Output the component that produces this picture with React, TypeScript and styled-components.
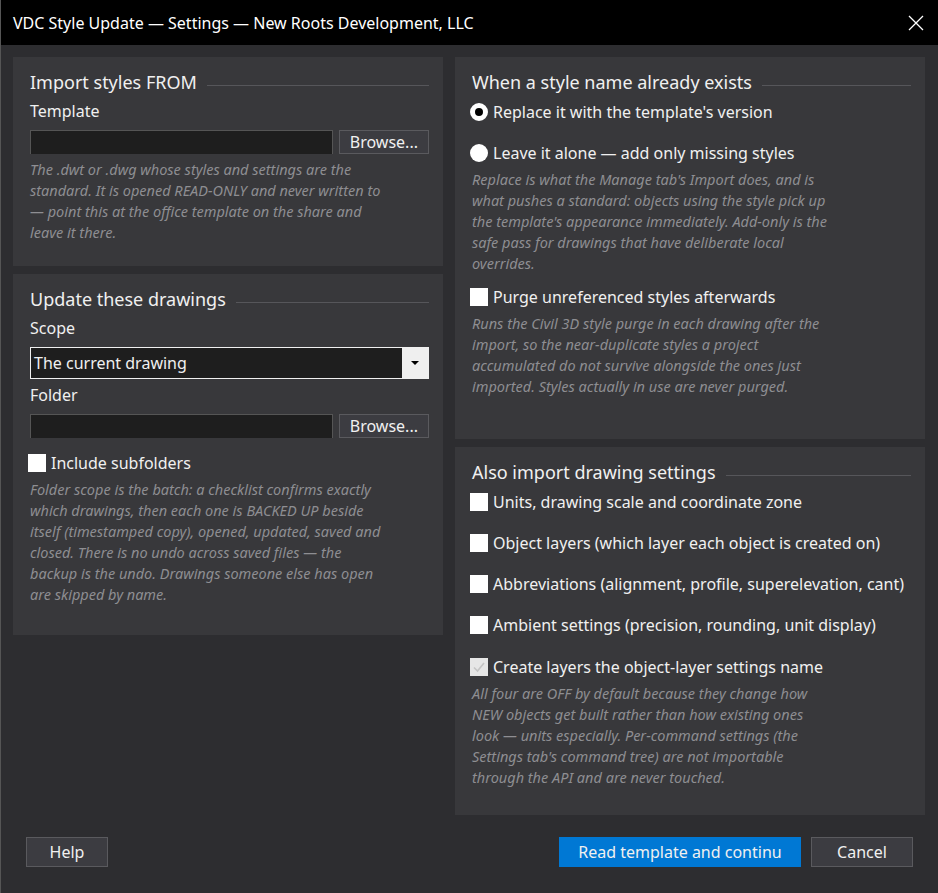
import React from "react";
import styled, { createGlobalStyle } from "styled-components";

const Global = createGlobalStyle`
  html, body { margin: 0; padding: 0; background: #2d2d30; }
  body { font-family: "Noto Sans", "Open Sans", sans-serif; color: #f0f0f0; }
`;

const Window = styled.div`
  width: 938px;
  height: 893px;
  background: #2d2d30;
  display: flex;
  flex-direction: column;
  box-sizing: border-box;
  border-left: 1px solid #555;
`;

const TitleBar = styled.div`
  height: 45px;
  background: #000;
  display: flex;
  align-items: center;
  justify-content: space-between;
  padding: 0 14px 0 12px;
  font-size: 16px;
  color: #fff;
  flex-shrink: 0;
`;

const Body = styled.div`
  display: grid;
  grid-template-columns: 430px 470px;
  column-gap: 12px;
  padding: 12px 0 0 12px;
  align-items: start;
`;

const Column = styled.div`
  display: flex;
  flex-direction: column;
  gap: 8px;
`;

const Panel = styled.div<{ $h: number }>`
  background: #38383b;
  height: ${(p) => p.$h}px;
  box-sizing: border-box;
  padding: 12px 14px 0 17px;
`;

const Legend = styled.div`
  display: flex;
  align-items: center;
  gap: 10px;
  font-size: 18px;
  line-height: 26px;
  color: #f0f0f0;
  &::after {
    content: "";
    flex: 1;
    height: 1px;
    background: #56565a;
    margin-top: 6px;
  }
`;

const Label = styled.div`
  font-size: 16px;
  line-height: 20px;
  margin: 6px 0 9px;
`;

const FieldRow = styled.div`
  display: flex;
  gap: 6px;
  align-items: center;
`;

const TextBox = styled.div`
  flex: 1;
  height: 23px;
  background: #1e1e1e;
  border: 1px solid #555;
  border-bottom: none;
`;

const Button = styled.button<{ $primary?: boolean }>`
  font-family: inherit;
  font-size: 16px;
  color: #f0f0f0;
  background: ${(p) => (p.$primary ? "#0078d4" : "#3c3c41")};
  border: 1px solid ${(p) => (p.$primary ? "#0078d4" : "#5a5a5e")};
  padding: 0 10px;
  height: 24px;
  cursor: pointer;
`;

const Help = styled.p`
  margin: 5px 0 0;
  font-size: 14.5px;
  line-height: 21px;
  font-style: italic;
  color: #8e8e92;
  max-width: 362px;
`;

const Select = styled.div`
  display: flex;
  height: 30px;
  border: 1px solid #f0f0f0;
  background: #1e1e1e;
  font-size: 16px;
  align-items: center;
  margin-bottom: 2px;
`;

const SelectText = styled.div`
  flex: 1;
  padding-left: 3px;
`;

const SelectArrow = styled.div`
  width: 26px;
  height: 100%;
  background: #efefef;
  display: flex;
  align-items: center;
  justify-content: center;
  &::before {
    content: "";
    border-left: 4px solid transparent;
    border-right: 4px solid transparent;
    border-top: 4px solid #000;
  }
`;

const Option = styled.label<{ $mt?: number }>`
  display: flex;
  align-items: center;
  gap: 5px;
  font-size: 16px;
  line-height: 22px;
  margin-top: ${(p) => p.$mt ?? 0}px;
  margin-left: -2px;
`;

const Box = styled.span<{ $checked?: boolean }>`
  width: 18px;
  height: 18px;
  background: ${(p) => (p.$checked ? "#e6e6e6" : "#fff")};
  display: inline-flex;
  align-items: center;
  justify-content: center;
  flex-shrink: 0;
`;

const Radio = styled.span<{ $selected?: boolean }>`
  width: 18px;
  height: 18px;
  border-radius: 50%;
  box-sizing: border-box;
  background: ${(p) => (p.$selected ? "#000" : "#fff")};
  border: ${(p) => (p.$selected ? "5px solid #fff" : "none")};
  flex-shrink: 0;
`;

const Footer = styled.div`
  display: flex;
  align-items: center;
  padding: 22px 25px 0 25px;
  gap: 10px;
`;

const Spacer = styled.div`
  flex: 1;
`;

export default function App() {
  return (
    <>
      <Global />
      <Window>
        <TitleBar>
          <span>VDC Style Update — Settings — New Roots Development, LLC</span>
          <svg width="16" height="16" viewBox="0 0 16 16">
            <path d="M1 1L15 15M15 1L1 15" stroke="#fff" strokeWidth="1.3" />
          </svg>
        </TitleBar>
        <Body>
          <Column>
            <Panel $h={209}>
              <Legend>Import styles FROM</Legend>
              <Label>Template</Label>
              <FieldRow>
                <TextBox />
                <Button>Browse...</Button>
              </FieldRow>
              <Help>
                The .dwt or .dwg whose styles and settings are the standard. It is opened READ-ONLY and never
                written to — point this at the office template on the share and leave it there.
              </Help>
            </Panel>
            <Panel $h={361}>
              <Legend>Update these drawings</Legend>
              <Label>Scope</Label>
              <Select>
                <SelectText>The current drawing</SelectText>
                <SelectArrow />
              </Select>
              <Label>Folder</Label>
              <FieldRow>
                <TextBox />
                <Button>Browse...</Button>
              </FieldRow>
              <Option $mt={14}>
                <Box /> Include subfolders
              </Option>
              <Help>
                Folder scope is the batch: a checklist confirms exactly which drawings, then each one is BACKED UP
                beside itself (timestamped copy), opened, updated, saved and closed. There is no undo across saved
                files — the backup is the undo. Drawings someone else has open are skipped by name.
              </Help>
            </Panel>
          </Column>
          <Column>
            <Panel $h={382}>
              <Legend>When a style name already exists</Legend>
              <Option $mt={6}>
                <Radio $selected /> Replace it with the template's version
              </Option>
              <Option $mt={19}>
                <Radio /> Leave it alone — add only missing styles
              </Option>
              <Help>
                Replace is what the Manage tab's Import does, and is what pushes a standard: objects using the style
                pick up the template's appearance immediately. Add-only is the safe pass for drawings that have
                deliberate local overrides.
              </Help>
              <Option $mt={12}>
                <Box /> Purge unreferenced styles afterwards
              </Option>
              <Help>
                Runs the Civil 3D style purge in each drawing after the import, so the near-duplicate styles a
                project accumulated do not survive alongside the ones just imported. Styles actually in use are
                never purged.
              </Help>
            </Panel>
            <Panel $h={368}>
              <Legend>Also import drawing settings</Legend>
              <Option $mt={6}>
                <Box /> Units, drawing scale and coordinate zone
              </Option>
              <Option $mt={19}>
                <Box /> Object layers (which layer each object is created on)
              </Option>
              <Option $mt={19}>
                <Box /> Abbreviations (alignment, profile, superelevation, cant)
              </Option>
              <Option $mt={19}>
                <Box /> Ambient settings (precision, rounding, unit display)
              </Option>
              <Option $mt={20}>
                <Box $checked>
                  <svg width="14" height="14" viewBox="0 0 14 14">
                    <path d="M2 7.5L5.5 11L12 3" stroke="#c4c4c4" strokeWidth="1.6" fill="none" />
                  </svg>
                </Box>{" "}
                Create layers the object-layer settings name
              </Option>
              <Help>
                All four are OFF by default because they change how NEW objects get built rather than how existing
                ones look — units especially. Per-command settings (the Settings tab's command tree) are not
                importable through the API and are never touched.
              </Help>
            </Panel>
          </Column>
        </Body>
        <Footer>
          <Button style={{ width: 82, height: 30 }}>Help</Button>
          <Spacer />
          <Button $primary style={{ width: 242, height: 30 }}>
            Read template and continu
          </Button>
          <Button style={{ width: 102, height: 30 }}>Cancel</Button>
        </Footer>
      </Window>
    </>
  );
}
